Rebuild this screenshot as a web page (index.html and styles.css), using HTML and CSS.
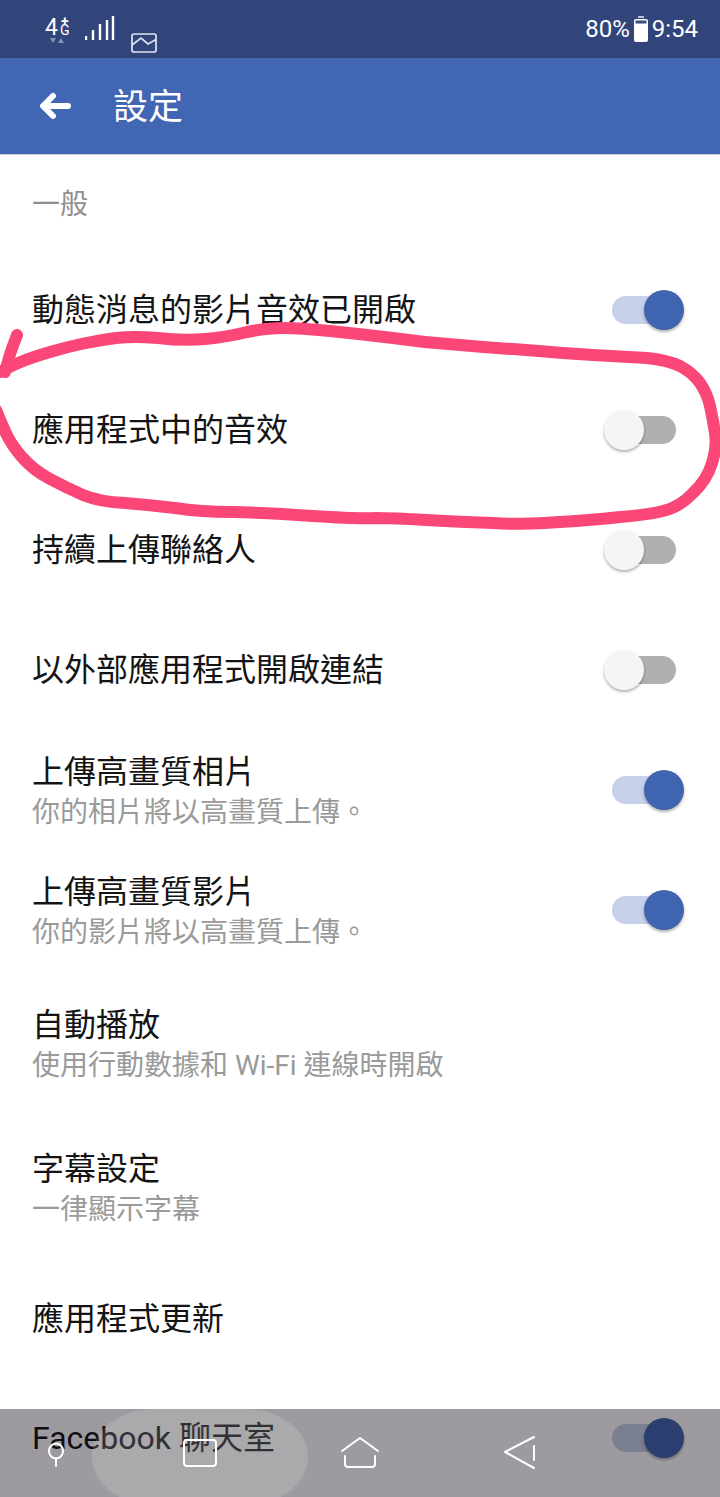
FILE: index.html
```html
<!DOCTYPE html>
<html lang="zh-TW">
<head>
	<meta charset="UTF-8">
	<title>設定</title>
	<link rel="stylesheet" href="styles.css">
</head>
<body>
<div class="page">
	<!-- status bar -->
	<div class="status">
		<div class="net">
			<span class="net-four">4</span>
			<span class="net-g">G</span>
			<svg class="net-arrows" width="16" height="7" viewBox="0 0 16 7"><path d="M1 1h6L4 6zM9 6h6l-3-5z" fill="#8593b8"/></svg>
		</div>
		<svg class="signal" width="30" height="26" viewBox="0 0 30 26">
			<path d="M2 21v4M9 15v10M16 9v16M23 5v20M29 1v24" stroke="#fff" stroke-width="2.4" fill="none" transform="translate(-1 -1)"/>
		</svg>
		<svg class="pic" width="26" height="20" viewBox="0 0 26 20" fill="none" stroke="#dfe4f0" stroke-width="1.7">
			<rect x="1" y="1" width="24" height="18" rx="2"/>
			<path d="M1 12l9-7 7 6 7-4 1 1"/>
		</svg>
		<div class="status-right">
			<span>80%</span>
			<svg class="battery" width="14" height="26" viewBox="0 0 14 26">
				<rect x="4" y="0" width="6" height="2" fill="#b9c2d8"/>
				<rect x="0" y="3" width="14" height="23" rx="2" fill="#fff"/>
				<rect x="1.5" y="4.5" width="11" height="3" fill="#3a4d80"/>
			</svg>
			<span>9:54</span>
		</div>
	</div>

	<!-- app bar -->
	<div class="appbar">
		<svg class="back" width="34" height="28" viewBox="0 0 34 28">
			<path d="M30 14H6M15 4L5 14l10 10" stroke="#fff" stroke-width="6" stroke-linecap="round" stroke-linejoin="round" fill="none"/>
		</svg>
		<h1 class="appbar-title">設定</h1>
	</div>

	<div class="label">一般</div>

	<div class="row">
		<div class="title">動態消息的影片音效已開啟</div>
		<div class="toggle on"></div>
	</div>
	<div class="row">
		<div class="title">應用程式中的音效</div>
		<div class="toggle"></div>
	</div>
	<div class="row">
		<div class="title">持續上傳聯絡人</div>
		<div class="toggle"></div>
	</div>
	<div class="row">
		<div class="title">以外部應用程式開啟連結</div>
		<div class="toggle"></div>
	</div>
	<div class="row">
		<div class="text">
			<div class="title">上傳高畫質相片</div>
			<div class="sub">你的相片將以高畫質上傳。</div>
		</div>
		<div class="toggle on"></div>
	</div>
	<div class="row">
		<div class="text">
			<div class="title">上傳高畫質影片</div>
			<div class="sub">你的影片將以高畫質上傳。</div>
		</div>
		<div class="toggle on"></div>
	</div>
	<div class="row row-play">
		<div class="text">
			<div class="title">自動播放</div>
			<div class="sub">使用行動數據和 Wi-Fi 連線時開啟</div>
		</div>
	</div>
	<div class="row row-caption">
		<div class="text">
			<div class="title">字幕設定</div>
			<div class="sub">一律顯示字幕</div>
		</div>
	</div>
	<div class="row row-update">
		<div class="title">應用程式更新</div>
	</div>
	<div class="row">
		<div class="title">Facebook 聊天室</div>
		<div class="toggle on"></div>
	</div>

	<!-- hand drawn circle on top of the screenshot -->
	<svg class="scribble" width="720" height="1497" viewBox="0 0 720 1497" fill="none" stroke="#fb4678" stroke-width="12" stroke-linecap="round" stroke-linejoin="round">
		<path d="M17 335Q10 352 5 372"/>
		<path d="M0 372Q13 365 23 361Q33 357 50 352Q67 347 83.5 343.5Q100 340 116 338Q133 336 158 338Q183 341 205 339Q227 337 247 332Q267 328 283 328Q300 328 330 331Q360 334 393 338Q427 343 460 345Q493 348 526 350Q560 353 593 355Q627 357 647 358Q667 360 680 366Q693 373 700 383Q707 393 710 406Q713 420 715 433Q717 447 712 463Q707 480 693 493Q680 507 663 511Q647 515 620 517Q593 520 560 522Q527 525 493 523Q460 522 426 520Q393 518 376 518Q360 519 313 516Q267 513 233 512Q200 512 175 508Q150 505 125 503Q100 502 83 495Q67 488 50 479Q33 470 21 456Q10 443 5 431Q0 420 -4 410"/>
	</svg>

	<!-- see-through navigation bar -->
	<div class="nav">
		<div class="nav-blob"></div>
		<svg class="nav-icons" width="720" height="88" viewBox="0 1409 720 88" fill="none" stroke="#fff" stroke-width="2" stroke-linecap="round" stroke-linejoin="round">
			<ellipse cx="56" cy="1451" rx="7" ry="7.5"/>
			<path d="M56 1458v8"/>
			<rect x="184" y="1440" width="32" height="26" rx="3"/>
			<path d="M342 1451l18-13 18 13M345 1456v8q0 3 3 3h24q3 0 3-3v-8"/>
			<path d="M534 1437l-29 15 29 16M534 1446v14"/>
		</svg>
	</div>
</div>
</body>
</html>
```

FILE: styles.css
```css
body, h1 {
	margin: 0;
	padding: 0;
}

body {
	background-color: #fff;
	font-family: Roboto, "Noto Sans CJK TC", sans-serif;
}

.page {
	position: relative;
	width: 720px;
	height: 1497px;
	overflow: hidden;
	background-color: #fff;
}

/* status bar */
.status {
	display: flex;
	align-items: flex-start;
	height: 58px;
	padding: 0 22px 0 45px;
	box-sizing: border-box;
	background-color: #31457b;
	color: #fff;
}

.net {
	position: relative;
	width: 26px;
	height: 46px;
}

.net-four {
	position: absolute;
	left: 0;
	top: 14px;
	font-size: 23px;
	line-height: 28px;
}

.net-g {
	position: absolute;
	left: 15px;
	top: 23px;
	font-size: 14px;
	line-height: 14px;
}

.net-g:before {
	content: '+';
	position: absolute;
	left: 1px;
	top: -9px;
	font-weight: bold;
}

.net-arrows {
	position: absolute;
	left: 4px;
	top: 37px;
}

.signal {
	margin: 16px 0 0 14px;
}

.pic {
	margin: 33px 0 0 16px;
}

.status-right {
	display: flex;
	align-items: center;
	gap: 4px;
	margin-left: auto;
	height: 26px;
	margin-top: 16px;
	font-size: 24px;
	line-height: 26px;
}

/* app bar */
.appbar {
	display: flex;
	align-items: center;
	height: 96px;
	padding-left: 38px;
	box-sizing: border-box;
	background-color: #4166b3;
	box-shadow: 0 1px 1px rgba(0, 0, 0, .2);
}

.back {
	margin-right: 41px;
}

.appbar-title {
	padding-top: 4px;
	color: #fff;
	font-size: 35px;
	font-weight: 400;
	line-height: 44px;
}

/* list */
.label {
	height: 96px;
	padding: 31px 32px 0;
	box-sizing: border-box;
	color: #8f8f8f;
	font-size: 28px;
	line-height: 40px;
}

.row {
	display: flex;
	align-items: center;
	justify-content: space-between;
	height: 120px;
	padding: 0 36px 0 32px;
	box-sizing: border-box;
}

.row-play {
	height: 146px;
}

.row-caption {
	height: 144px;
}

.row-update {
	height: 118px;
}

.text {
	padding-top: 4px;
}

.row-caption .text {
	padding-top: 2px;
}

.title {
	color: #141414;
	font-size: 32px;
	line-height: 41px;
}

.sub {
	color: #9a9a9a;
	font-size: 28px;
	line-height: 40px;
}

/* switch */
.toggle {
	position: relative;
	flex: none;
	width: 80px;
	height: 40px;
}

.toggle:before {
	content: '';
	position: absolute;
	left: 8px;
	top: 6px;
	width: 64px;
	height: 28px;
	border-radius: 14px;
	background-color: #b1afb1;
}

.toggle:after {
	content: '';
	position: absolute;
	left: 0;
	top: 0;
	width: 40px;
	height: 40px;
	border-radius: 50%;
	background-color: #f5f5f5;
	box-shadow: 0 2px 3px rgba(0, 0, 0, .3);
}

.toggle.on:before {
	background-color: #c5d1e8;
}

.toggle.on:after {
	left: 40px;
	background-color: #4065b0;
}

/* drawn on top */
.scribble {
	position: absolute;
	left: 0;
	top: 0;
}

.nav {
	position: absolute;
	left: 0;
	bottom: 0;
	width: 720px;
	height: 88px;
	overflow: hidden;
	background-color: rgba(10, 5, 15, .4);
}

.nav-blob {
	position: absolute;
	left: 92px;
	top: 0;
	width: 216px;
	height: 96px;
	border-radius: 62px / 48px;
	background-color: rgba(255, 255, 255, .14);
}

.nav-icons {
	position: absolute;
	left: 0;
	top: 0;
}
```
